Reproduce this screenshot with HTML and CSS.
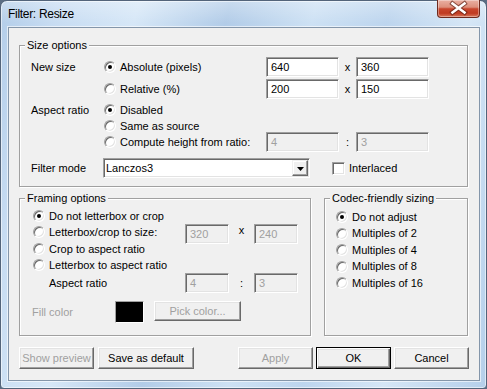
FILE: index.html
```html
<!doctype html>
<html lang="en">
<head>
	<meta charset="UTF-8">
	<title>Filter: Resize</title>
	<link rel="stylesheet" href="styles.css">
</head>
<body>
	<div class="window">
		<div class="titlebar">
			<span class="title">Filter: Resize</span>
			<a class="close" href="javascript:void(0);">
				<svg width="41" height="16" viewBox="0 0 41 16">
					<path d="M14.5 3.5 L26.5 12.5 M26.5 3.5 L14.5 12.5" stroke="#5a1e14" stroke-opacity=".65" stroke-width="4.6" stroke-linecap="square"/>
					<path d="M14.5 3.5 L26.5 12.5 M26.5 3.5 L14.5 12.5" stroke="#fff" stroke-width="2.6" stroke-linecap="square"/>
				</svg>
			</a>
		</div>
		<div class="client">
			<!-- size options -->
			<div class="group size-group">
				<span class="legend">Size options</span>
				<div class="row">
					<span class="row-label">New size</span>
					<span class="radio checked choice"><i></i>Absolute (pixels)</span>
					<span class="edit">640</span>
					<span class="sep">x</span>
					<span class="edit">360</span>
				</div>
				<div class="row gap2">
					<span class="row-label"></span>
					<span class="radio choice"><i></i>Relative (%)</span>
					<span class="edit">200</span>
					<span class="sep">x</span>
					<span class="edit">150</span>
				</div>
				<div class="row short gap3">
					<span class="row-label">Aspect ratio</span>
					<span class="radio checked"><i></i>Disabled</span>
				</div>
				<div class="row short">
					<span class="row-label"></span>
					<span class="radio"><i></i>Same as source</span>
				</div>
				<div class="row pull2">
					<span class="row-label"></span>
					<span class="radio choice"><i></i>Compute height from ratio:</span>
					<span class="edit disabled">4</span>
					<span class="sep">:</span>
					<span class="edit disabled">3</span>
				</div>
				<div class="row filter-row">
					<span class="filter-label">Filter mode</span>
					<span class="combo">
						<span class="combo-text">Lanczos3</span>
						<span class="drop"><svg width="7" height="4" viewBox="0 0 7 4"><polygon points="0,0 7,0 3.5,4" fill="#000"/></svg></span>
					</span>
					<span class="check"></span>
					<span>Interlaced</span>
				</div>
			</div>

			<div class="lower">
				<!-- framing -->
				<div class="group framing-group">
					<span class="legend">Framing options</span>
					<div class="row short">
						<span class="radio checked"><i></i>Do not letterbox or crop</span>
					</div>
					<div class="row top">
						<span class="radio choice"><i></i>Letterbox/crop to size:</span>
						<span class="edit disabled">320</span>
						<span class="sep">x</span>
						<span class="edit disabled">240</span>
					</div>
					<div class="row short pull3">
						<span class="radio"><i></i>Crop to aspect ratio</span>
					</div>
					<div class="row short">
						<span class="radio"><i></i>Letterbox to aspect ratio</span>
					</div>
					<div class="row">
						<span class="choice indent">Aspect ratio</span>
						<span class="edit disabled">4</span>
						<span class="sep">:</span>
						<span class="edit disabled">3</span>
					</div>
					<div class="fill-row">
						<span class="fill-label">Fill color</span>
						<span class="swatch"></span>
						<span class="btn disabled pick">Pick color...</span>
					</div>
				</div>
				<!-- codec -->
				<div class="group codec-group">
					<span class="legend">Codec-friendly sizing</span>
					<div class="codec-row"><span class="radio checked"><i></i>Do not adjust</span></div>
					<div class="codec-row"><span class="radio"><i></i>Multiples of 2</span></div>
					<div class="codec-row"><span class="radio"><i></i>Multiples of 4</span></div>
					<div class="codec-row"><span class="radio"><i></i>Multiples of 8</span></div>
					<div class="codec-row"><span class="radio"><i></i>Multiples of 16</span></div>
				</div>
			</div>

			<div class="buttons">
				<span class="btn disabled">Show preview</span>
				<span class="btn save">Save as default</span>
				<span class="btn disabled apply">Apply</span>
				<span class="btn default">OK</span>
				<span class="btn">Cancel</span>
			</div>
		</div>
	</div>
</body>
</html>
```

FILE: styles.css
```css
* {
	box-sizing: border-box;
}
body {
	margin: 0;
	background: #5b6d83;
	font-family: "Liberation Sans", Arial, sans-serif;
	font-size: 11px;
	line-height: 13px;
	color: #000;
}
a {
	text-decoration: none;
}
.window {
	width: 487px;
	height: 389px;
	display: flex;
	flex-direction: column;
	padding: 0 6px 7px 7px;
	border: 1px solid #53647a;
	border-radius: 7px 7px 4px 4px;
	background:
		linear-gradient(to bottom, rgba(255,255,255,.3), rgba(255,255,255,0) 22px),
		linear-gradient(103deg, #b3cde9 0%, #c7dcf2 10%, #d6e7f7 24%, #b2cce8 40%, #cde1f4 55%, #bdd5ee 68%, #d5e6f6 82%, #b5cfea 100%);
	box-shadow: inset 0 0 0 1px rgba(255,255,255,.55);
}
.titlebar {
	height: 26px;
	display: flex;
	align-items: flex-start;
}
.title {
	margin-top: 6px;
	font-size: 12px;
	line-height: 14px;
	letter-spacing: -0.3px;
}
.close {
	margin-left: auto;
	margin-top: -1px;
	width: 43px;
	height: 18px;
	border: 1px solid #6e2a1e;
	border-top: none;
	border-radius: 0 0 4px 4px;
	background: linear-gradient(#eab0a2 0%, #dd8f7b 42%, #c8462d 52%, #c03b22 78%, #d9795c 100%);
	box-shadow: inset 0 0 0 1px rgba(255,255,255,.35);
}
.close svg {
	display: block;
}
.client {
	flex: 1;
	display: flex;
	flex-direction: column;
	padding: 17px 10px 11px 10px;
	border: 1px solid #8496aa;
	background: #f0f0f0;
	box-shadow: 0 0 0 1px rgba(255,255,255,.6);
}

/* group boxes */
.group {
	position: relative;
	border: 1px solid #a0a0a0;
	box-shadow: inset 1px 1px 0 #fff, 1px 1px 0 #fff;
}
.legend {
	position: absolute;
	top: -7px;
	left: 5px;
	padding: 0 2px;
	background: #f0f0f0;
	white-space: nowrap;
}
.size-group {
	width: 449px;
	height: 142px;
	padding: 11px 10px 8px 11px;
}
.lower {
	display: flex;
	margin-top: 11px;
	height: 138px;
}
.framing-group {
	width: 292px;
	padding: 9px 10px 0 13px;
}
.codec-group {
	width: 144px;
	margin-left: 13px;
	padding: 10px 8px 0 11px;
}

/* rows */
.row {
	display: flex;
	align-items: center;
	height: 20px;
	white-space: nowrap;
}
.row.short {
	height: 16px;
}
.row.top {
	align-items: flex-start;
}
.row.top .radio {
	height: 16px;
}
.gap2 {
	margin-top: 2px;
}
.gap3 {
	margin-top: 3px;
}
.pull2 {
	margin-top: -2px;
}
.pull3 {
	margin-top: -3px;
}
.row-label {
	width: 73px;
	flex: none;
}
.size-group .choice {
	width: 162px;
	flex: none;
}
.size-group .edit {
	width: 73px;
}
.size-group .sep {
	width: 17px;
}
.framing-group .choice {
	width: 152px;
	flex: none;
}
.framing-group .edit {
	width: 44px;
}
.framing-group .sep {
	width: 25px;
}
.indent {
	padding-left: 16px;
}
.sep {
	text-align: center;
	flex: none;
}
.filter-row {
	margin-top: 6px;
}
.filter-label {
	width: 72px;
	flex: none;
}
.fill-row {
	display: flex;
	align-items: flex-start;
	margin-top: 8px;
	height: 22px;
}
.fill-label {
	width: 83px;
	margin-left: -1px;
	line-height: 22px;
	color: #a0a0a0;
}
.swatch {
	width: 29px;
	height: 22px;
	background: #000;
	border: 1px solid;
	border-color: #a0a0a0 #fff #fff #a0a0a0;
}
.codec-row {
	height: 16.5px;
	display: flex;
	align-items: center;
	white-space: nowrap;
}

/* controls */
.radio {
	display: flex;
	align-items: center;
}
.radio i {
	position: relative;
	flex: none;
	width: 12px;
	height: 12px;
	margin-right: 4px;
	border-radius: 50%;
	background: #fff;
	border: 1px solid;
	border-color: #a0a0a0 #fff #fff #a0a0a0;
	box-shadow: inset 1px 1px 0 #696969, inset -1px -1px 0 #e3e3e3;
}
.radio.checked i::after {
	content: "";
	position: absolute;
	left: 3px;
	top: 3px;
	width: 4px;
	height: 4px;
	border-radius: 50%;
	background: #000;
}
.edit {
	flex: none;
	height: 20px;
	padding: 0 4px;
	line-height: 18px;
	background: #fff;
	border: 1px solid;
	border-color: #a0a0a0 #fff #fff #a0a0a0;
	box-shadow: inset 1px 1px 0 #696969, inset -1px -1px 0 #e3e3e3;
}
.edit.disabled {
	background: #f0f0f0;
	color: #a0a0a0;
}
.combo {
	display: flex;
	flex: none;
	width: 207px;
	height: 20px;
	padding: 1px;
	background: #fff;
	border: 1px solid;
	border-color: #a0a0a0 #fff #fff #a0a0a0;
	box-shadow: inset 1px 1px 0 #696969, inset -1px -1px 0 #e3e3e3;
}
.combo-text {
	flex: 1;
	padding-left: 1px;
	line-height: 16px;
}
.drop {
	width: 16px;
	height: 16px;
	display: flex;
	align-items: center;
	justify-content: center;
	background: #f0f0f0;
	border: 1px solid;
	border-color: #f0f0f0 #696969 #696969 #f0f0f0;
	box-shadow: inset -1px -1px 0 #a0a0a0, inset 1px 1px 0 #fff;
}
.drop svg {
	display: block;
	margin-top: 1px;
}
.check {
	flex: none;
	width: 13px;
	height: 13px;
	margin: 0 4px 0 22px;
	background: #fff;
	border: 1px solid;
	border-color: #a0a0a0 #fff #fff #a0a0a0;
	box-shadow: inset 1px 1px 0 #696969, inset -1px -1px 0 #e3e3e3;
}
.btn {
	display: flex;
	align-items: center;
	justify-content: center;
	width: 75px;
	height: 22px;
	white-space: nowrap;
	background: #f0f0f0;
	border: 1px solid;
	border-color: #fff #696969 #696969 #fff;
	box-shadow: inset -1px -1px 0 #a0a0a0, inset 1px 1px 0 #e3e3e3;
}
.btn.disabled {
	color: #a0a0a0;
}
.btn.default {
	border-color: #000;
	box-shadow: inset 1px 1px 0 #fff, inset -1px -1px 0 #696969, inset -2px -2px 0 #a0a0a0, inset 2px 2px 0 #e3e3e3;
}
.pick {
	width: 87px;
	height: 20px;
	margin-left: 10px;
}
.buttons {
	display: flex;
	margin-top: 11px;
	height: 22px;
}
.save {
	width: 96px;
	margin-left: 4px;
}
.apply {
	margin-left: auto;
}
.buttons .btn + .btn.default,
.buttons .btn.default + .btn {
	margin-left: 3px;
}
```
